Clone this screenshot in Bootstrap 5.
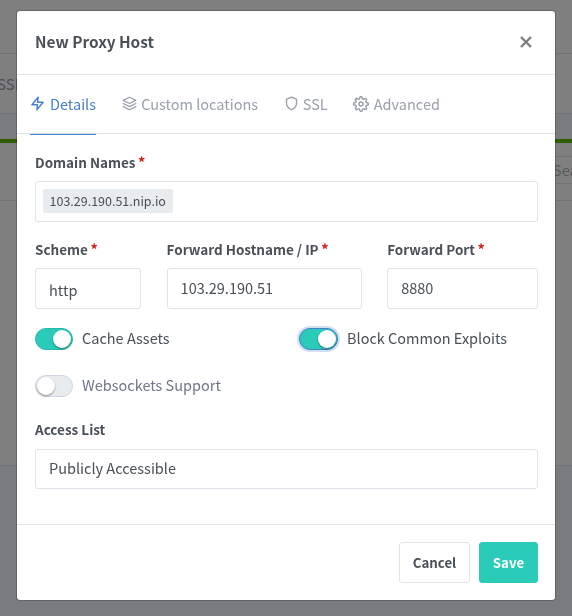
<!DOCTYPE html>
<html lang="en">
<head>
<meta charset="utf-8">
<meta name="viewport" content="width=device-width, initial-scale=1">
<title>New Proxy Host</title>
<link href="https://cdn.jsdelivr.net/npm/bootstrap@5.3.0/dist/css/bootstrap.min.css" rel="stylesheet">
<style>
  body { font-family: "Noto Sans CJK SC", "Open Sans", sans-serif; font-size: 14.5px; line-height: 24px; color: #495057; background: #f5f7fb; height: 616px; overflow: hidden; }
  .page-top { height: 54px; border-bottom: 1px solid #dfe4ec; }
  .page-nav { height: 60px; border-bottom: 1px solid #dfe4ec; color: #9aa0ac; padding-left: 0; }
  .page-nav span { margin-left: -3px; font-size: 14.8px; letter-spacing: .2px; }
  .page-gap { height: 25px; }
  .page-card { height: 327px; border-bottom: 1px solid #dfe4ec; border-top: 4px solid #5eba00; }
  .page-card-head { height: 58px; border-bottom: 1px solid #dfe4ec; overflow: hidden; }
  .page-search { width: 60px; height: 28px; border: 1px solid #dfe4ec; margin-top: 13px; margin-right: -41px; padding-left: 1px; line-height: 26px; color: #adb5bd; flex: none; }
  .page-search span { margin-left: -2px; }
  .modal { padding: 10px 16px 0; overflow: hidden; }
  .modal-backdrop { --bs-backdrop-zindex: 1; }
  .modal-dialog { margin: 0; max-width: 540px; width: 540px; }
  .modal-content { border: 1px solid rgba(0,0,0,.2); border-radius: 4px; height: 591px; color: #495057; }
  .modal-header { height: 64px; padding: 0 17px 2px 18px; border-bottom: 1px solid #e2e5ea; border-radius: 0; }
  .modal-title { font-size: 15.4px; font-weight: 700; line-height: 24px; margin-top: -1px; }
  .close-x { width: 24px; height: 24px; padding: 0; border: 0; background: none; color: #7f7f7f; }
  .tab-row { height: 59px; padding: 0 13px; border-bottom: 1px solid #dfe2e6; gap: 26px; }
  .tab-row .nav-link { height: 60px; padding: 0 0 2px; color: #9aa0ac; display: flex; align-items: center; gap: 5px; border-bottom: 1px solid transparent; }
  .tab-row .nav-link.active { color: #467fcf; border-color: #467fcf; }
  .tab-row .nav-link.snug { gap: 4.6px; margin-left: -.5px; }
  .tab-row svg, .close-x svg { fill: none; stroke: currentColor; stroke-width: 2.2; stroke-linecap: round; stroke-linejoin: round; flex: none; }
  .tab-row .nav-link .narrow { margin: 0 -.5px 0 0; }
  .modal-body { padding: 16px 17px 0 18px; height: 390px; flex: none; }
  .form-label { display: block; font-size: 13.5px; font-weight: 700; line-height: 24px; margin: 0 0 7px; white-space: nowrap; }
  .req { color: #cd201f; font-size: 14.5px; line-height: 1; margin-left: -.5px; }
  .form-control { height: 41px; padding: 0 13px; border: 1px solid #dfe2ea; border-radius: 3px; color: #495057; font-size: 14.5px; line-height: 38px; }
  .tag-box { padding: 7px; line-height: 24px; }
  .domain-tag { display: inline-block; height: 24px; padding: 0 7px 0 6.5px; background: #e9ecef; border-radius: 3px; font-size: 12.5px; line-height: 24px; vertical-align: top; }
  .host-grid { display: grid; grid-template-columns: 106px 195px 151px; column-gap: 25.6px; margin-top: 15px; }
  .scheme-value { line-height: 42px; }
  .switch-grid { display: grid; grid-template-columns: 264px 1fr; margin-top: 18px; row-gap: 23px; }
  .switch-item { height: 24px; gap: 9px; }
  .switch-text { margin-top: -2px; }
  .toggle { width: 38px; height: 22px; border-radius: 11px; border: 1px solid #26b8a9; background: #2bcbba; display: flex; justify-content: flex-end; padding: 1px; flex: none; margin-top: -1px; }
  .toggle::after { content: ""; width: 18px; height: 18px; border-radius: 50%; background: #fff; box-shadow: 0 1px 2px rgba(0,0,0,.4); }
  .toggle.focused { width: 39px; border-color: #467fcf; box-shadow: 0 0 0 2px rgba(70,127,207,.25); }
  .toggle.off { background: #e9ecef; border-color: #ced4e0; justify-content: flex-start; }
  .off-text { color: #6e7687; }
  .access-label { margin: 19px 0 8px; }
  .access-value { height: 40px; line-height: 36px; }
  .modal-footer { height: 76px; padding: 0 17px; border-top: 1px solid #e2e5ec; gap: 9px; flex-wrap: nowrap; }
  .modal-footer > * { margin: 0; }
  .btn { height: 41px; padding: 0; font-size: 13.3px; font-weight: 700; line-height: 37px; border-radius: 3px; }
  .btn-cancel, .btn-cancel:hover { width: 71px; border: 1px solid #dfe2ea; color: #495057; background: #fff; }
  .btn-save, .btn-save:hover { width: 59px; background: #2bcbba; border: 1px solid #2bcbba; color: #fff; }
</style>
<script src="https://cdn.jsdelivr.net/npm/bootstrap@5.3.0/dist/js/bootstrap.bundle.min.js"></script>
</head>
<body>
<div class="page-top bg-white"></div>
<div class="page-nav bg-white d-flex align-items-center"><span>SSL</span></div>
<div class="page-gap"></div>
<div class="page-card bg-white">
  <div class="page-card-head d-flex justify-content-end"><div class="page-search"><span>Search</span></div></div>
</div>
<div class="modal-backdrop show"></div>

<div class="modal d-block" tabindex="-1" role="dialog">
  <div class="modal-dialog">
    <div class="modal-content">
      <div class="modal-header">
        <h5 class="modal-title">New Proxy Host</h5>
        <button type="button" class="close-x d-flex align-items-center justify-content-center" aria-label="Close">
          <svg width="12" height="12" viewBox="0 0 12 12"><path d="M1 1l10 10M11 1l-10 10" stroke-linecap="butt" stroke-width="2.4"/></svg>
        </button>
      </div>
      <ul class="nav tab-row flex-nowrap text-nowrap">
        <li class="nav-item"><a class="nav-link active" href="#">
          <svg width="15" height="15" viewBox="0 0 24 24"><path d="M13 2L3 14h9l-1 8 10-12h-9l1-8z"/></svg><span>Details</span></a></li>
        <li class="nav-item"><a class="nav-link snug" href="#">
          <svg width="15" height="15" viewBox="0 0 24 24"><path d="M12 2L2 7l10 5 10-5-10-5zM2 17l10 5 10-5M2 12l10 5 10-5"/></svg><span>Custom locations</span></a></li>
        <li class="nav-item"><a class="nav-link snug" href="#">
          <svg class="narrow" width="15" height="15" viewBox="0 0 24 24"><path d="M12 22s8-4 8-10V5l-8-3-8 3v7c0 6 8 10 8 10z"/></svg><span>SSL</span></a></li>
        <li class="nav-item"><a class="nav-link snug" href="#">
          <svg width="16" height="16" viewBox="0 0 24 24"><circle cx="12" cy="12" r="3"/><path d="M19.4 15a1.65 1.65 0 0 0 .33 1.82l.06.06a2 2 0 1 1-2.83 2.83l-.06-.06a1.65 1.65 0 0 0-2.8 1.17V21a2 2 0 0 1-4 0v-.09A1.65 1.65 0 0 0 9 19.4a1.65 1.65 0 0 0-1.82.33l-.06.06a2 2 0 1 1-2.83-2.83l.06-.06A1.65 1.65 0 0 0 3.18 14H3a2 2 0 0 1 0-4h.09A1.65 1.65 0 0 0 4.6 9a1.65 1.65 0 0 0-.33-1.82l-.06-.06a2 2 0 1 1 2.83-2.83l.06.06A1.65 1.65 0 0 0 10 3.18V3a2 2 0 0 1 4 0v.09a1.65 1.65 0 0 0 2.82 1.24l.06-.06a2 2 0 1 1 2.83 2.83l-.06.06A1.65 1.65 0 0 0 20.91 10H21a2 2 0 0 1 0 4h-.09a1.65 1.65 0 0 0-1.51 1z"/></svg><span>Advanced</span></a></li>
      </ul>
      <div class="modal-body">
        <label class="form-label">Domain Names <span class="req">*</span></label>
        <div class="form-control tag-box"><span class="domain-tag">103.29.190.51.nip.io</span></div>
        <div class="host-grid">
          <div><label class="form-label">Scheme <span class="req">*</span></label><div class="form-control scheme-value">http</div></div>
          <div><label class="form-label">Forward Hostname / IP <span class="req">*</span></label><div class="form-control">103.29.190.51</div></div>
          <div><label class="form-label">Forward Port <span class="req">*</span></label><div class="form-control">8880</div></div>
        </div>
        <div class="switch-grid">
          <div class="switch-item d-flex align-items-center"><span class="toggle"></span><span class="switch-text">Cache Assets</span></div>
          <div class="switch-item d-flex align-items-center"><span class="toggle focused"></span><span class="switch-text">Block Common Exploits</span></div>
          <div class="switch-item d-flex align-items-center"><span class="toggle off"></span><span class="switch-text off-text">Websockets Support</span></div>
        </div>
        <label class="form-label access-label">Access List</label>
        <div class="form-control access-value">Publicly Accessible</div>
      </div>
      <div class="modal-footer">
        <button type="button" class="btn btn-cancel">Cancel</button>
        <button type="button" class="btn btn-save">Save</button>
      </div>
    </div>
  </div>
</div>
</body>
</html>
